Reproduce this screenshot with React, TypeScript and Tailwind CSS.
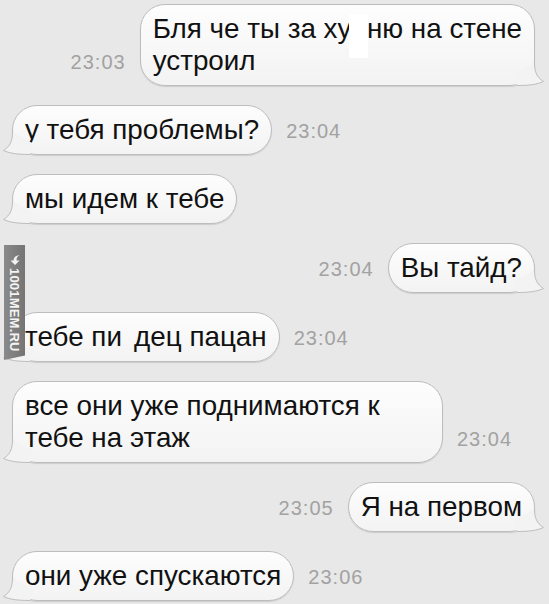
import React from "react";

function Tail({ side }: { side: "left" | "right" }) {
  const pos =
    side === "left"
      ? "left-[-13px] bottom-[-2px]"
      : "right-[-13px] bottom-[-2px] -scale-x-100";
  const d = "M12.5 0 C12.5 9 10 14.5 3.5 18.5 C10 21.5 18 22.5 30 22.5";
  return (
    <svg
      className={`pointer-events-none absolute ${pos}`}
      width="40"
      height="24"
      viewBox="0 0 40 24"
    >
      <path d={`${d} L34 12 L12.5 0 Z`} fill="#f3f3f3" />
      <path d={d} fill="none" stroke="#bdbdbd" strokeWidth="1" />
    </svg>
  );
}

function Bubble({
  side,
  children,
  className = "",
}: {
  side: "left" | "right";
  children: React.ReactNode;
  className?: string;
}) {
  return (
    <div
      className={`relative rounded-[25px] border border-[#bdbdbd] bg-gradient-to-b from-[#fdfdfd] to-[#f3f3f3] px-[12px] py-[8px] text-[27.8px] leading-[32px] text-[#111] shadow-[0_1px_1px_rgba(0,0,0,0.12)] ${className}`}
    >
      {children}
      <Tail side={side} />
    </div>
  );
}

function Time({ children }: { children: React.ReactNode }) {
  return (
    <div className="mb-[14px] text-[20px] leading-[20px] tracking-[1px] text-[#a2a2a2]">
      {children}
    </div>
  );
}

function Received({
  text,
  time,
  className,
}: {
  text: React.ReactNode;
  time?: string;
  className?: string;
}) {
  return (
    <div className="flex items-end gap-[14px] pl-[12px]">
      <Bubble side="left" className={className}>
        {text}
      </Bubble>
      {time && <Time>{time}</Time>}
    </div>
  );
}

function Sent({ text, time }: { text: React.ReactNode; time: string }) {
  return (
    <div className="flex items-end justify-end gap-[14px] pr-[14px]">
      <Time>{time}</Time>
      <Bubble side="right">{text}</Bubble>
    </div>
  );
}

export default function App() {
  return (
    <div
      className="relative h-[604px] w-[549px] overflow-hidden bg-[#e8e8e8]"
      style={{ fontFamily: '"Liberation Sans", Arial, sans-serif' }}
    >
      <div className="flex flex-col gap-[19px] pt-[4px]">
        <Sent
          time="23:03"
          text={
            <>
              Бля че ты за ху
              <span className="relative">
                <span className="text-transparent">й</span>
                <span className="absolute left-[-2px] right-[-1px] top-[1px] bottom-[-14px] bg-white" />
              </span>
              ню на стене
              <br />
              устроил
            </>
          }
        />
        <Received text="у тебя проблемы?" time="23:04" />
        <Received text="мы идем к тебе" />
        <Sent time="23:04" text="Вы тайд?" />
        <Received
          time="23:04"
          text={
            <>
              тебе пи<span className="text-transparent">з</span>дец пацан
            </>
          }
        />
        <Received
          time="23:04"
          className="w-[431px]"
          text={
            <>
              все они уже поднимаются к
              <br />
              тебе на этаж
            </>
          }
        />
        <Sent time="23:05" text="Я на первом" />
        <Received text="они уже спускаются" time="23:06" />
      </div>

      {/* watermark ribbon */}
      <div className="absolute left-[4px] top-[245px] flex h-[115px] w-[21px] flex-col items-center bg-gradient-to-r from-[#8a8a8a] to-[#747474] pt-[9px] [clip-path:polygon(0_0,100%_0,100%_96%,0_100%)]">
        <svg width="12" height="12" viewBox="0 0 12 12">
          <path
            d="M6 11 L1.5 6.5 L4.5 6.5 C4.5 3.5 6.5 1.5 10.5 1 C8 2.5 7.5 4 7.5 6.5 L10.5 6.5 Z"
            fill="#f2f2f2"
          />
        </svg>
        <div className="mt-[2px] text-[13px] font-bold leading-[21px] tracking-[0.2px] text-[#f4f4f4] [writing-mode:vertical-rl]">
          1001MEM.RU
        </div>
      </div>
    </div>
  );
}
